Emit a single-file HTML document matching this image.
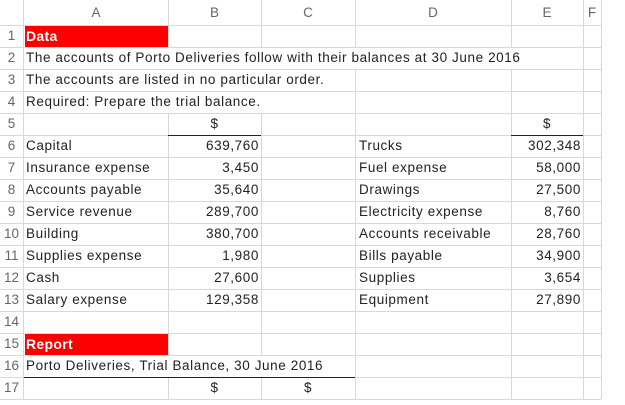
<!DOCTYPE html>
<html><head><style>
body{margin:0;background:#fff;width:625px;height:405px;overflow:hidden;position:relative;font-family:"Liberation Sans",sans-serif;font-size:13.5px;letter-spacing:0.6px;color:#222}
.v{position:absolute;top:0;width:1px;height:399px;background:#d8d8d8}
.h{position:absolute;left:0;width:601px;height:1px;background:#d8d8d8}
.t{position:absolute;height:22px;line-height:22px;white-space:nowrap}
.l{left:26px}
.d{left:359px}
.b{right:366px;text-align:right}
.e{right:44px;text-align:right}
.rn{left:0;width:23px;text-align:center;color:#666;letter-spacing:0}
.ch{top:0;height:25px;line-height:25px;color:#666;text-align:center;letter-spacing:0}
.red{position:absolute;left:25px;width:143px;height:21px;background:#f00}
.w{color:#fff;font-weight:bold;font-size:14px;letter-spacing:0.3px}
.k{position:absolute;height:1px;background:#222}
.cv{position:absolute;height:21px;background:#fff}
</style></head><body>
<div class="v" style="left:23px"></div><div class="v" style="left:168px"></div><div class="v" style="left:261px"></div><div class="v" style="left:355px"></div><div class="v" style="left:511px"></div><div class="v" style="left:583px"></div><div class="v" style="left:601px"></div>
<div class="h" style="top:25px"></div><div class="h" style="top:47px"></div><div class="h" style="top:69px"></div><div class="h" style="top:91px"></div><div class="h" style="top:113px"></div><div class="h" style="top:135px"></div><div class="h" style="top:157px"></div><div class="h" style="top:179px"></div><div class="h" style="top:201px"></div><div class="h" style="top:223px"></div><div class="h" style="top:245px"></div><div class="h" style="top:267px"></div><div class="h" style="top:289px"></div><div class="h" style="top:311px"></div><div class="h" style="top:333px"></div><div class="h" style="top:355px"></div><div class="h" style="top:377px"></div><div class="h" style="top:399px"></div>
<div class="cv" style="left:168px;top:48px;width:415px"></div>
<div class="cv" style="left:168px;top:70px;width:187px"></div>
<div class="cv" style="left:168px;top:92px;width:187px"></div>
<div class="cv" style="left:168px;top:356px;width:187px"></div>
<div class="red" style="top:26px"></div><div class="red" style="top:334px"></div>
<div class="k" style="left:168px;top:135px;width:93px"></div>
<div class="k" style="left:511px;top:135px;width:72px"></div>
<div class="k" style="left:24px;top:377px;width:331px"></div>
<div class="t ch" style="left:24px;width:144px">A</div><div class="t ch" style="left:168px;width:93px">B</div><div class="t ch" style="left:261px;width:94px">C</div><div class="t ch" style="left:355px;width:156px">D</div><div class="t ch" style="left:511px;width:72px">E</div><div class="t ch" style="left:583px;width:18px">F</div>
<div class="t rn" style="top:25px">1</div><div class="t rn" style="top:47px">2</div><div class="t rn" style="top:69px">3</div><div class="t rn" style="top:91px">4</div><div class="t rn" style="top:113px">5</div><div class="t rn" style="top:135px">6</div><div class="t rn" style="top:157px">7</div><div class="t rn" style="top:179px">8</div><div class="t rn" style="top:201px">9</div><div class="t rn" style="top:223px">10</div><div class="t rn" style="top:245px">11</div><div class="t rn" style="top:267px">12</div><div class="t rn" style="top:289px">13</div><div class="t rn" style="top:311px">14</div><div class="t rn" style="top:333px">15</div><div class="t rn" style="top:355px">16</div><div class="t rn" style="top:377px">17</div>
<div class="t l w" style="top:25px">Data</div>
<div class="t l" style="top:47px">The accounts of Porto Deliveries follow with their balances at 30 June 2016</div>
<div class="t l" style="top:69px">The accounts are listed in no particular order.</div>
<div class="t l" style="top:91px">Required: Prepare the trial balance.</div>
<div class="t" style="top:113px;left:168px;width:93px;text-align:center">$</div>
<div class="t" style="top:113px;left:511px;width:72px;text-align:center">$</div>
<div class="t l" style="top:135px">Capital</div><div class="t b" style="top:135px">639,760</div><div class="t d" style="top:135px">Trucks</div><div class="t e" style="top:135px">302,348</div>
<div class="t l" style="top:157px">Insurance expense</div><div class="t b" style="top:157px">3,450</div><div class="t d" style="top:157px">Fuel expense</div><div class="t e" style="top:157px">58,000</div>
<div class="t l" style="top:179px">Accounts payable</div><div class="t b" style="top:179px">35,640</div><div class="t d" style="top:179px">Drawings</div><div class="t e" style="top:179px">27,500</div>
<div class="t l" style="top:201px">Service revenue</div><div class="t b" style="top:201px">289,700</div><div class="t d" style="top:201px">Electricity expense</div><div class="t e" style="top:201px">8,760</div>
<div class="t l" style="top:223px">Building</div><div class="t b" style="top:223px">380,700</div><div class="t d" style="top:223px">Accounts receivable</div><div class="t e" style="top:223px">28,760</div>
<div class="t l" style="top:245px">Supplies expense</div><div class="t b" style="top:245px">1,980</div><div class="t d" style="top:245px">Bills payable</div><div class="t e" style="top:245px">34,900</div>
<div class="t l" style="top:267px">Cash</div><div class="t b" style="top:267px">27,600</div><div class="t d" style="top:267px">Supplies</div><div class="t e" style="top:267px">3,654</div>
<div class="t l" style="top:289px">Salary expense</div><div class="t b" style="top:289px">129,358</div><div class="t d" style="top:289px">Equipment</div><div class="t e" style="top:289px">27,890</div>
<div class="t l w" style="top:333px">Report</div>
<div class="t l" style="top:355px">Porto Deliveries, Trial Balance, 30 June 2016</div>
<div class="t" style="top:377px;left:168px;width:93px;text-align:center">$</div>
<div class="t" style="top:377px;left:261px;width:94px;text-align:center">$</div>
</body></html>
